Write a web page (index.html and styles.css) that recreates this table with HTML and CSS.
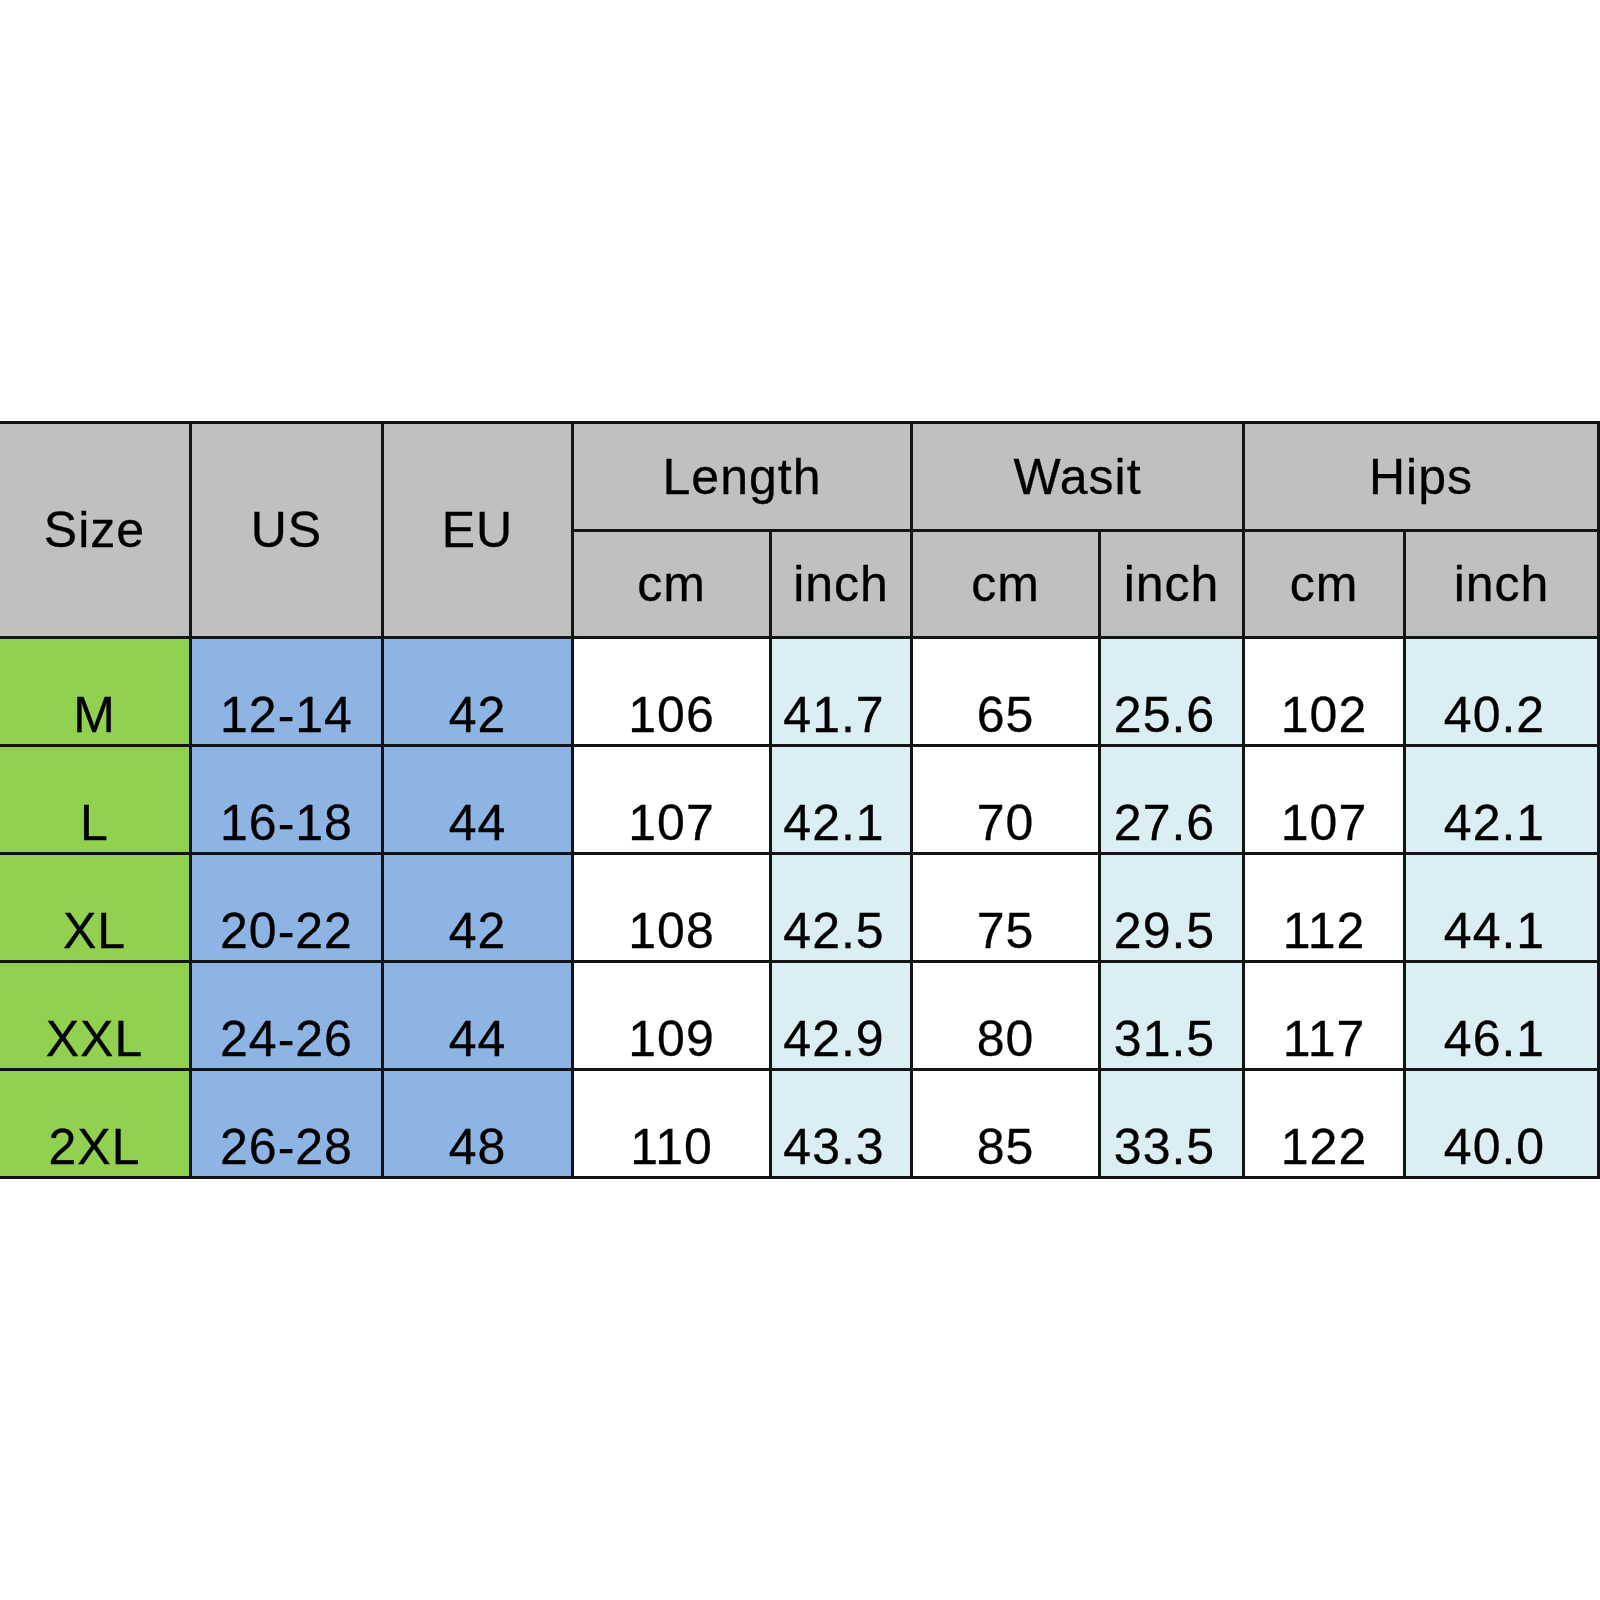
FILE: index.html
```html
<!DOCTYPE html>
<html>
<head>
<meta charset="utf-8">
<title>Size chart</title>
<link rel="stylesheet" href="styles.css">
</head>
<body>
<div class="chart">
  <div class="cell head tall c1">Size</div>
  <div class="cell head tall c2">US</div>
  <div class="cell head tall c3">EU</div>
  <div class="cell head group g-len">Length</div>
  <div class="cell head group g-wai">Wasit</div>
  <div class="cell head group g-hip">Hips</div>
  <div class="cell head sub">cm</div>
  <div class="cell head sub">inch</div>
  <div class="cell head sub">cm</div>
  <div class="cell head sub">inch</div>
  <div class="cell head sub">cm</div>
  <div class="cell head sub">inch</div>

  <div class="cell size">M</div><div class="cell region">12-14</div><div class="cell region">42</div>
  <div class="cell cm">106</div><div class="cell inch">41.7</div><div class="cell cm">65</div><div class="cell inch">25.6</div><div class="cell cm">102</div><div class="cell inch">40.2</div>

  <div class="cell size">L</div><div class="cell region">16-18</div><div class="cell region">44</div>
  <div class="cell cm">107</div><div class="cell inch">42.1</div><div class="cell cm">70</div><div class="cell inch">27.6</div><div class="cell cm">107</div><div class="cell inch">42.1</div>

  <div class="cell size">XL</div><div class="cell region">20-22</div><div class="cell region">42</div>
  <div class="cell cm">108</div><div class="cell inch">42.5</div><div class="cell cm">75</div><div class="cell inch">29.5</div><div class="cell cm">112</div><div class="cell inch">44.1</div>

  <div class="cell size">XXL</div><div class="cell region">24-26</div><div class="cell region">44</div>
  <div class="cell cm">109</div><div class="cell inch">42.9</div><div class="cell cm">80</div><div class="cell inch">31.5</div><div class="cell cm">117</div><div class="cell inch">46.1</div>

  <div class="cell size">2XL</div><div class="cell region">26-28</div><div class="cell region">48</div>
  <div class="cell cm">110</div><div class="cell inch">43.3</div><div class="cell cm">85</div><div class="cell inch">33.5</div><div class="cell cm">122</div><div class="cell inch">40.0</div>
</div>
</body>
</html>
```
FILE: styles.css
```css
html, body {
  margin: 0;
  padding: 0;
  background: #ffffff;
}

.chart {
  margin-top: 421px;
  width: 1600px;
  box-sizing: border-box;
  padding: 3px 3px 3px 0;
  background: #141414;
  display: grid;
  grid-template-columns: 189px 189px 187px 195px 138px 185px 141px 158px 191px;
  grid-template-rows: 105px 104px repeat(5, 105px);
  gap: 3px;
  font-family: "Liberation Sans", Arial, sans-serif;
  font-size: 50px;
  line-height: normal;
  letter-spacing: 1px;
  color: #000;
  -webkit-text-stroke: 0.3px #000;
}

.cell {
  display: flex;
  justify-content: center;
  align-items: flex-end;
  white-space: nowrap;
}

.head {
  background: #c0c0c0;
  align-items: center;
}

.tall { grid-row: 1 / span 2; }
.c1 { grid-column: 1; }
.c2 { grid-column: 2; }
.c3 { grid-column: 3; }

.g-len { grid-column: 4 / span 2; }
.g-wai { grid-column: 6 / span 2; }
.g-hip { grid-column: 8 / span 2; }

.sub { grid-row: 2; }

.size { background: #92d050; }
.region { background: #8db4e2; }
.cm { background: #ffffff; }
.inch {
  background: #daeef3;
  padding-right: 14px;
}
```
